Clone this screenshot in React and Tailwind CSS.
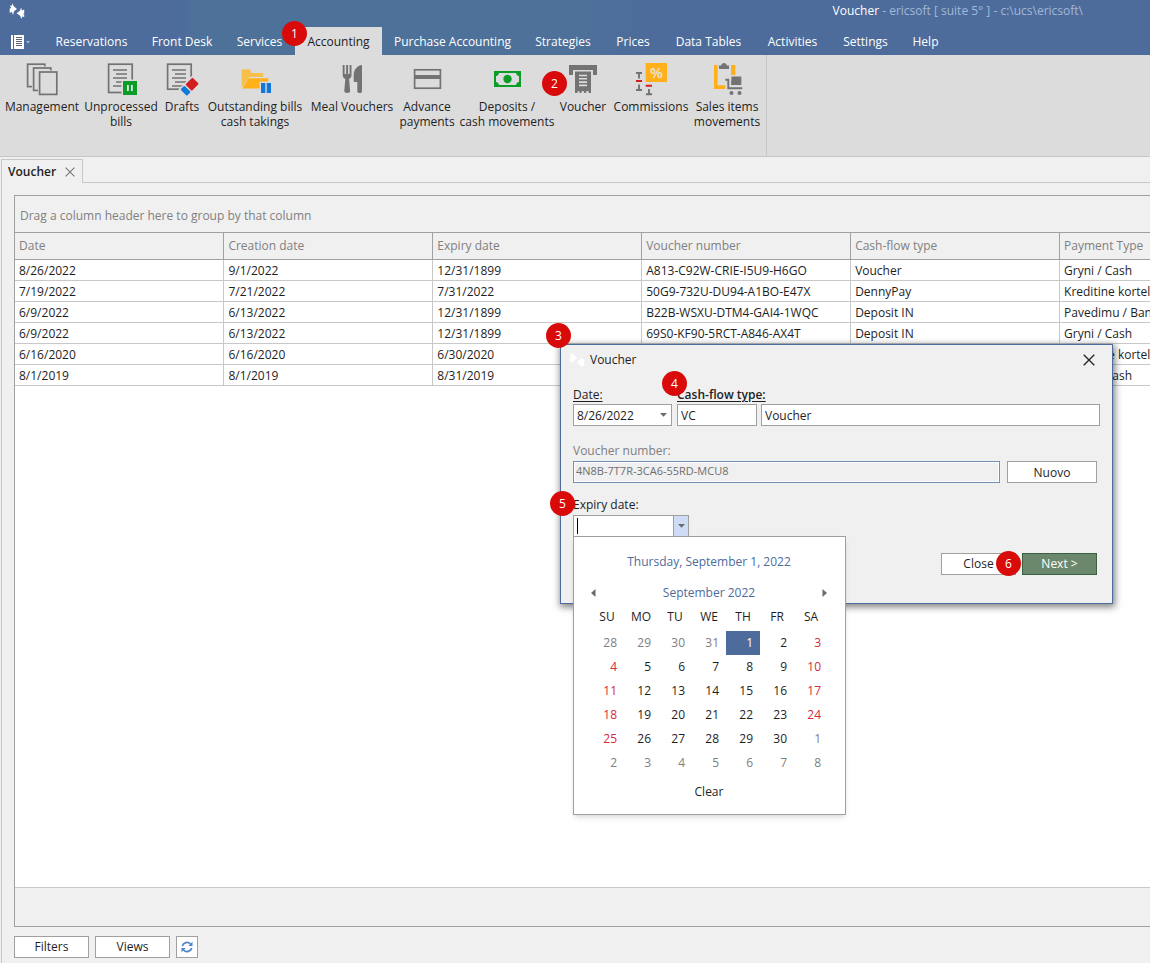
import React from "react";

const GRAY = "#737373";
const PANEL = "#dcdcdc";

function Icon({ children }) {
  return (
    <svg width="36" height="34" viewBox="0 0 36 34" fill="none" aria-hidden="true" className="shrink-0">
      {children}
    </svg>
  );
}

function Sheet({ x, y, w = 17.2, h = 22.4 }) {
  return (
    <>
      <rect x={x - 1.6} y={y - 1.6} width={w + 3.2} height={h + 3.2} fill={PANEL} />
      <rect x={x} y={y} width={w} height={h} fill={PANEL} stroke={GRAY} strokeWidth="1.7" />
    </>
  );
}

function DocLines({ x }) {
  return (
    <path
      d={`M${x} 8h14M${x + 3} 12h11M${x} 16h14M${x + 3} 20h11M${x} 24h11`}
      stroke={GRAY}
      strokeWidth="1.7"
    />
  );
}

const icons = {
  management: (
    <Icon>
      <Sheet x={3.6} y={2.2} />
      <Sheet x={9.6} y={6} />
      <Sheet x={15.6} y={10} />
    </Icon>
  ),
  unprocessed: (
    <Icon>
      <rect x="5.6" y="2.2" width="23.6" height="28.3" stroke={GRAY} strokeWidth="1.7" />
      <DocLines x={10} />
      <rect x="18.5" y="17.5" width="17" height="17" fill={PANEL} />
      <rect x="20" y="19" width="14" height="14" fill="#0a9e27" />
      <path d="M24.9 23v6M28.9 23v6" stroke="#e6f2e6" strokeWidth="1.8" />
    </Icon>
  ),
  drafts: (
    <Icon>
      <rect x="3.6" y="2.2" width="23.6" height="25" stroke={GRAY} strokeWidth="1.7" />
      <DocLines x={8} />
      <g transform="rotate(-45 26 25)">
        <rect x="16" y="18.5" width="20" height="13" fill={PANEL} />
        <rect x="17.5" y="20" width="5.5" height="9" rx="1" fill="#1177d8" />
        <rect x="24.5" y="20" width="10" height="9" rx="1" fill="#d21e1e" />
      </g>
    </Icon>
  ),
  outstanding: (
    <Icon>
      <path d="M4.7 7.3H13l1.4 3.6h11.8V15H12.5L4.7 26z" fill="#f7bf4c" />
      <path d="M11.6 16.2h19.8v2.6l-4 7.8H5.4z" fill="#ffb01a" />
      <rect x="22.5" y="19.6" width="13" height="13" fill={PANEL} />
      <path d="M24 21h4.3v10H24zM29.7 21H34v10h-4.3z" fill="#1177d8" />
    </Icon>
  ),
  meal: (
    <Icon>
      <path
        d="M8.7 3h1.9v9h1.5V3h2v9h1.5V3h1.9v10.200c0 2-1.100 3.200-2.400 3.600l1 12.200c.1 1.300-1.100 2-2.900 2s-3-.7-2.900-2l1-12.200c-1.400-.4-2.600-1.600-2.600-3.600z"
        fill={GRAY}
      />
      <path d="M28 3v26.500c0 .9-.8 1.500-2.300 1.500s-2.400-.6-2.400-1.500V20h-3.600V13c0-5.500 3.500-9.500 8.300-10z" fill={GRAY} />
    </Icon>
  ),
  advance: (
    <Icon>
      <rect x="5.600" y="7.800" width="25.800" height="18.400" stroke={GRAY} strokeWidth="1.7" />
      <rect x="5" y="13" width="27" height="4" fill={GRAY} />
    </Icon>
  ),
  deposits: (
    <Icon>
      <rect x="5" y="9" width="27" height="16" fill="#0a9e27" />
      <path d="M10 11h17c.2 1.600 1.300 2.800 3 3v6c-1.700.2-2.800 1.400-3 3H10c-.2-1.600-1.300-2.800-3-3v-6c1.700-.2 2.800-1.400 3-3z" fill={PANEL} />
      <circle cx="18.500" cy="17" r="4.200" fill="#0a9e27" />
    </Icon>
  ),
  voucher: (
    <Icon>
      <path d="M4 3h28v10h-4V8H8v5H4z" fill={GRAY} />
      <path d="M10 9.500h16V31h-2.300v-1.700h-2.600V31h-2v-1.700h-2.600V31h-2v-1.700h-2V31H10z" fill={GRAY} />
      <path d="M14 13.500h8M14 16.800h8M14 20.100h8M14 23.400h8" stroke={PANEL} strokeWidth="1.600" />
    </Icon>
  ),
  commissions: (
    <Icon>
      <rect x="12.700" y="1" width="21.300" height="19" fill="#ffb01a" />
      <text x="23.400" y="16" textAnchor="middle" fontSize="15" fontWeight="600" fontFamily="Open Sans, sans-serif" fill="#e8e4da">%</text>
      <path d="M3 11h6M6 11v5.500M3 28h6M6 28v-5.500M13 32.200h6M16 32.200V27" stroke={GRAY} strokeWidth="1.900" />
      <path d="M3 19h6M12.700 23.700h6.300" stroke="#d21e1e" strokeWidth="2" />
    </Icon>
  ),
  sales: (
    <Icon>
      <path d="M5 3h3.600v20.200h7.600V27H5zM22 3h4.300v10H22z" fill="#ffb01a" />
      <path d="M10 3.500h2.200C12.500 2 13.500 1 15 1s2.500 1 2.800 2.500H20V7H10z" fill={GRAY} />
      <path d="M22.500 14.500h9.800v8.500H22z" fill={GRAY} />
      <path d="M16.300 17.800h3v8.400h14" stroke={GRAY} strokeWidth="1.900" />
      <circle cx="22.500" cy="31" r="2" fill={GRAY} />
      <circle cx="30.500" cy="31" r="2" fill={GRAY} />
    </Icon>
  ),
};

const ribbon = [
  { icon: "management", lines: ["Management"], width: "w-[78px]" },
  { icon: "unprocessed", lines: ["Unprocessed", "bills"], width: "w-[80px]" },
  { icon: "drafts", lines: ["Drafts"], width: "w-[42px]" },
  { icon: "outstanding", lines: ["Outstanding bills", "cash takings"], width: "w-[104px]" },
  { icon: "meal", lines: ["Meal Vouchers"], width: "w-[90px]" },
  { icon: "advance", lines: ["Advance", "payments"], width: "w-[60px]" },
  { icon: "deposits", lines: ["Deposits /", "cash movements"], width: "w-[100px]" },
  { icon: "voucher", lines: ["Voucher"], width: "w-[52px]", badge: 2 },
  { icon: "commissions", lines: ["Commissions"], width: "w-[84px]" },
  { icon: "sales", lines: ["Sales items", "movements"], width: "w-[68px]" },
];

const menu = [
  { label: "Reservations", width: "w-[97px]" },
  { label: "Front Desk", width: "w-[84px]" },
  { label: "Services", width: "w-[71px]" },
  { label: "Accounting", width: "w-[87px]" },
  { label: "Purchase Accounting", width: "w-[141px]" },
  { label: "Strategies", width: "w-[80px]" },
  { label: "Prices", width: "w-[60px]" },
  { label: "Data Tables", width: "w-[91px]" },
  { label: "Activities", width: "w-[77px]" },
  { label: "Settings", width: "w-[69px]" },
  { label: "Help", width: "w-[51px]" },
];

const columns = ["Date", "Creation date", "Expiry date", "Voucher number", "Cash-flow type", "Payment Type"];

const rows = [
  ["8/26/2022", "9/1/2022", "12/31/1899", "A813-C92W-CRIE-I5U9-H6GO", "Voucher", "Gryni / Cash"],
  ["7/19/2022", "7/21/2022", "7/31/2022", "50G9-732U-DU94-A1BO-E47X", "DennyPay", "Kreditine kortele"],
  ["6/9/2022", "6/13/2022", "12/31/1899", "B22B-WSXU-DTM4-GAI4-1WQC", "Deposit IN", "Pavedimu / Bank"],
  ["6/9/2022", "6/13/2022", "12/31/1899", "69S0-KF90-5RCT-A846-AX4T", "Deposit IN", "Gryni / Cash"],
  ["6/16/2020", "6/16/2020", "6/30/2020", "", "", "Kreditine kortele"],
  ["8/1/2019", "8/1/2019", "8/31/2019", "", "", "Gryni / Cash"],
];

const weeks = [
  [28, 29, 30, 31, 1, 2, 3],
  [4, 5, 6, 7, 8, 9, 10],
  [11, 12, 13, 14, 15, 16, 17],
  [18, 19, 20, 21, 22, 23, 24],
  [25, 26, 27, 28, 29, 30, 1],
  [2, 3, 4, 5, 6, 7, 8],
];

function dayClass(day, week, weekday) {
  if (week === 0 && day === 1) return "bg-[#4d6c9b] text-white";
  if ((week === 0 && day > 20) || week === 5 || (week === 4 && day === 1)) return "text-[#808080]";
  if (weekday === 0 || weekday === 6) return "text-[#d42a3c]";
  return "text-[#1e1e1e]";
}

function Badge({ n, className }) {
  return (
    <span
      className={`pointer-events-none absolute z-20 flex size-[25px] items-center justify-center rounded-full bg-[#d90a0a] text-xs text-white ${className}`}
    >
      {n}
    </span>
  );
}

function Logo({ className }) {
  return (
    <svg width="16" height="16" viewBox="0 0 16 16" fill="currentColor" aria-hidden="true" className={className}>
      <path d="M3.200.200L4.800 3.200 8 6 5 8.200l-1 3.800-1.200-3.200L.700 10V5.600L2.300 5 .8 2.600l2 .2z" />
      <path d="M12 4.400l1 3 2.200-1v4l-1.400.6 1.400.6v2.400l-2-.4-.7 2.400-1.400-3.200L7.600 10.200l3.400-2.400z" />
    </svg>
  );
}

function DownArrow() {
  return (
    <svg width="7" height="4" viewBox="0 0 7 4" aria-hidden="true">
      <path d="M0 0h7L3.500 3.800z" fill="#6b6b6b" />
    </svg>
  );
}

function Cross({ size }) {
  return (
    <svg width={size} height={size} viewBox="0 0 10 10" aria-hidden="true">
      <path d="M.6.6l8.800 8.800M9.400.6L.6 9.400" stroke="currentColor" strokeWidth="1.100" />
    </svg>
  );
}

function Calendar() {
  return (
    <div className="absolute left-0 top-[21px] z-10 flex w-[273px] flex-col border border-[#a0a0a0] bg-white pb-3 pl-4 pr-[17px] pt-4 shadow-md">
      <button type="button" className="h-[18px] self-center text-[#4d6c9b]">Thursday, September 1, 2022</button>
      <div className="mt-3 flex h-5 items-center justify-between px-px text-[#4d6c9b]">
        <button type="button" aria-label="Previous month">
          <svg width="5" height="8" viewBox="0 0 5 8"><path d="M4.500 0v8L0 4z" fill="#6b6b6b" /></svg>
        </button>
        <button type="button">September 2022</button>
        <button type="button" aria-label="Next month">
          <svg width="5" height="8" viewBox="0 0 5 8"><path d="M.5 0v8L5 4z" fill="#6b6b6b" /></svg>
        </button>
      </div>
      <table className="mt-1 w-full table-fixed border-collapse">
        <thead>
          <tr className="h-6">
            {["SU", "MO", "TU", "WE", "TH", "FR", "SA"].map((d) => (
              <th key={d} className="pb-1 font-normal">{d}</th>
            ))}
          </tr>
        </thead>
        <tbody>
          {weeks.map((week, w) => (
            <tr key={w} className="h-6">
              {week.map((day, i) => (
                <td key={i} className="p-0">
                  <button type="button" className={`h-6 w-full pr-[7px] text-right ${dayClass(day, w, i)}`}>
                    {day}
                  </button>
                </td>
              ))}
            </tr>
          ))}
        </tbody>
      </table>
      <button type="button" className="mt-[7px] h-5 self-center">Clear</button>
    </div>
  );
}

function VoucherDialog() {
  return (
    <div
      role="dialog"
      aria-label="Voucher"
      className="absolute left-[560px] top-[344px] z-10 w-[553px] border border-[#4d6c9b] bg-[#f0f0f0] shadow-[1px_2px_7px_1px_rgba(0,0,0,0.5)]"
    >
      <Badge n={3} className="-left-[15px] -top-[22px]" />
      <header className="flex h-[30px] items-center pl-2 pr-[15px]">
        <Logo className="text-white" />
        <span className="ml-[5px] flex-1">Voucher</span>
        <button type="button" aria-label="Close dialog" className="p-0.5 text-[#222]"><Cross size={12} /></button>
      </header>
      <form className="pb-7 pl-3 pr-[15px] pt-3" onSubmit={(e) => e.preventDefault()}>
        <div className="-mr-[3px] flex gap-[5px]">
          <div className="w-[99px]">
            <label htmlFor="date" className="mb-px block h-4 leading-4 underline underline-offset-2">Date:</label>
            <div className="flex h-[22px] border border-[#a0a0a0] bg-white">
              <input id="date" defaultValue="8/26/2022" className="min-w-0 flex-1 px-[3px] pt-px outline-none" />
              <button type="button" aria-label="Choose date" className="flex w-[15px] items-center justify-center"><DownArrow /></button>
            </div>
          </div>
          <div className="relative flex-1">
            <Badge n={4} className="-left-[15px] -top-[16px]" />
            <label htmlFor="flow-code" className="mb-px block h-4 font-semibold leading-4 underline underline-offset-2">Cash-flow type:</label>
            <div className="flex gap-1">
              <input id="flow-code" defaultValue="VC" className="h-[22px] w-20 border border-[#a0a0a0] bg-white px-[3px] outline-none" />
              <input aria-label="Cash-flow description" defaultValue="Voucher" className="h-[22px] min-w-0 flex-1 border border-[#a0a0a0] bg-white px-[3px] outline-none" />
            </div>
          </div>
        </div>
        <label htmlFor="number" className="mb-0.5 mt-[17px] block h-4 leading-4 text-[#808080]">Voucher number:</label>
        <div className="flex gap-[7px]">
          <input
            id="number"
            readOnly
            value="4N8B-7T7R-3CA6-55RD-MCU8"
            className="h-[22px] min-w-0 flex-1 border border-[#7390b5] bg-[#f0f0f0] px-[2px] pb-[3px] text-[11px] text-[#6e6e6e] shadow-[inset_0_0_0_1px_white] outline-none"
          />
          <button type="button" className="h-[22px] w-[90px] border border-[#a0a0a0] bg-white pt-px">Nuovo</button>
        </div>
        <div className="relative mt-[14px]">
          <Badge n={5} className="-left-[23px] -top-[6px]" />
          <label htmlFor="expiry" className="mb-0.5 block h-4 leading-4">Expiry date:</label>
          <div className="relative w-[116px]">
            <div className="flex h-[22px] border border-[#a0a0a0] bg-white">
              <div className="flex min-w-0 flex-1 items-center pl-[3px]">
                <span className="h-4 w-px bg-black" />
                <input id="expiry" className="w-full min-w-0 outline-none" />
              </div>
              <button type="button" aria-label="Choose expiry date" className="flex w-[15px] items-center justify-center border-l border-[#a0a0a0] bg-[#cfdcf5]">
                <DownArrow />
              </button>
            </div>
            <Calendar />
          </div>
        </div>
        <div className="mt-4 flex justify-end gap-[6px]">
          <div className="relative">
            <button type="button" className="h-[22px] w-[75px] border border-[#a0a0a0] bg-white">Close</button>
            <Badge n={6} className="-right-[5px] -top-[2px]" />
          </div>
          <button type="submit" className="h-[22px] w-[75px] border border-[#3f5f42] bg-[#6c886c] text-white">Next &gt;</button>
        </div>
      </form>
    </div>
  );
}

export default function App() {
  return (
    <div className="relative flex min-h-screen flex-col overflow-hidden bg-[#f0f0f0] font-['Open_Sans',sans-serif] text-xs text-[#1e1e1e]">
      <header className="bg-[linear-gradient(90deg,#4d6c9b_16%,#4d7199_17%,#4d7199_50%,#4d6c9b_56%)] text-white">
        <div className="flex h-[27px] items-start justify-between pl-[9px] pr-[67px] pt-[3px]">
          <Logo />
          <p className="leading-4">
            Voucher <span className="text-[#a3b8d8]">- ericsoft [ suite 5° ] - c:\ucs\ericsoft\</span>
          </p>
        </div>
        <nav className="flex h-7 whitespace-nowrap">
          <button type="button" aria-label="Application menu" className="flex w-[43px] items-center gap-[2px] pl-[11px] pt-0.5">
            <svg width="13" height="14" viewBox="0 0 13 14" shapeRendering="crispEdges" aria-hidden="true">
              <rect width="13" height="14" fill="#fff" />
              <rect x="2" width="1" height="14" fill="#5f6670" />
              <path d="M5 2.500h6M5 4.500h6M5 6.500h6M5 8.500h6M5 10.500h6" stroke="#5f6670" strokeWidth="1" />
            </svg>
            <svg width="4" height="3" viewBox="0 0 4 3" aria-hidden="true"><path d="M0 0h4L2 2.500z" fill="#a3b8d8" /></svg>
          </button>
          {menu.map(({ label, width }) => (
            <a
              key={label}
              href="#"
              className={`relative flex items-center justify-center pt-px ${width} ${label === "Accounting" ? "bg-[#dcdcdc] text-[#1e1e1e]" : "text-white"}`}
            >
              {label}
              {label === "Accounting" && <Badge n={1} className="-left-[13px] -top-[6px]" />}
            </a>
          ))}
        </nav>
      </header>

      <div className="flex h-[102px] border-b border-[#c6c6c6] bg-[#dcdcdc]">
        <div className="flex items-start border-r border-[#c6c6c6] pl-[3px] pr-[5px] pt-[7px]">
          {ribbon.map((item) => (
            <button key={item.icon} type="button" className={`relative flex shrink-0 flex-col items-center whitespace-nowrap leading-[15px] ${item.width}`}>
              {icons[item.icon]}
              <span className="mt-[3px]">
                {item.lines.map((line) => (
                  <span key={line} className="block">{line}</span>
                ))}
              </span>
              {item.badge && <Badge n={item.badge} className="-left-[15px] top-[9px]" />}
            </button>
          ))}
        </div>
      </div>

      <div className="flex pt-0.5">
        <div className="ml-px flex h-6 w-[82px] items-center justify-between border-x border-t border-[#c6c6c6] px-1.5 font-semibold">
          Voucher
          <button type="button" aria-label="Close tab" className="p-px text-[#777]"><Cross size={10} /></button>
        </div>
        <div className="flex-1 border-b border-[#c6c6c6]" />
      </div>

      <main className="ml-px flex flex-1 flex-col border-l border-[#c6c6c6] pb-[5px] pl-3 pt-3">
        <section className="flex flex-1 flex-col overflow-hidden border-y border-l border-[#a0a0a0]">
          <p className="flex h-9 items-center pl-[5px] pt-[3px] text-[#808080]">Drag a column header here to group by that column</p>
          <div className="flex-1 bg-white">
            <table className="w-[1254px] table-fixed border-collapse">
              <thead>
                <tr className="h-[27px] border-y border-[#a0a0a0] bg-[#f0f0f0] text-left text-[#808080]">
                  {columns.map((c) => (
                    <th key={c} className="border-r border-[#a0a0a0] px-1 font-normal">{c}</th>
                  ))}
                </tr>
              </thead>
              <tbody>
                {rows.map((row, r) => (
                  <tr key={r} className="h-[21px] border-b border-[#c8c8c8]">
                    {row.map((cell, c) => (
                      <td key={c} className="border-r border-[#c8c8c8] px-1 pb-0 pt-0.5 leading-4">{cell}</td>
                    ))}
                  </tr>
                ))}
              </tbody>
            </table>
          </div>
          <div className="h-[39px] border-t border-[#c8c8c8]" />
        </section>
        <div className="mt-[9px] flex gap-[6px]">
          <button type="button" className="h-[22px] w-[75px] border border-[#a0a0a0] bg-white">Filters</button>
          <button type="button" className="h-[22px] w-[75px] border border-[#a0a0a0] bg-white">Views</button>
          <button type="button" aria-label="Refresh" className="flex h-[22px] w-[22px] items-center justify-center border border-[#a0a0a0] bg-white">
            <svg width="12" height="12" viewBox="0 0 12 12" fill="none" aria-hidden="true">
              <path d="M1.300 5A4.800 4.800 0 0 1 9.500 3M10.700 7A4.800 4.800 0 0 1 2.500 9" stroke="#4a86c8" strokeWidth="1.700" />
              <path d="M11.500.8V5H7.300zM.5 11.200V7h4.200z" fill="#4a86c8" />
            </svg>
          </button>
        </div>
      </main>

      <VoucherDialog />
    </div>
  );
}
